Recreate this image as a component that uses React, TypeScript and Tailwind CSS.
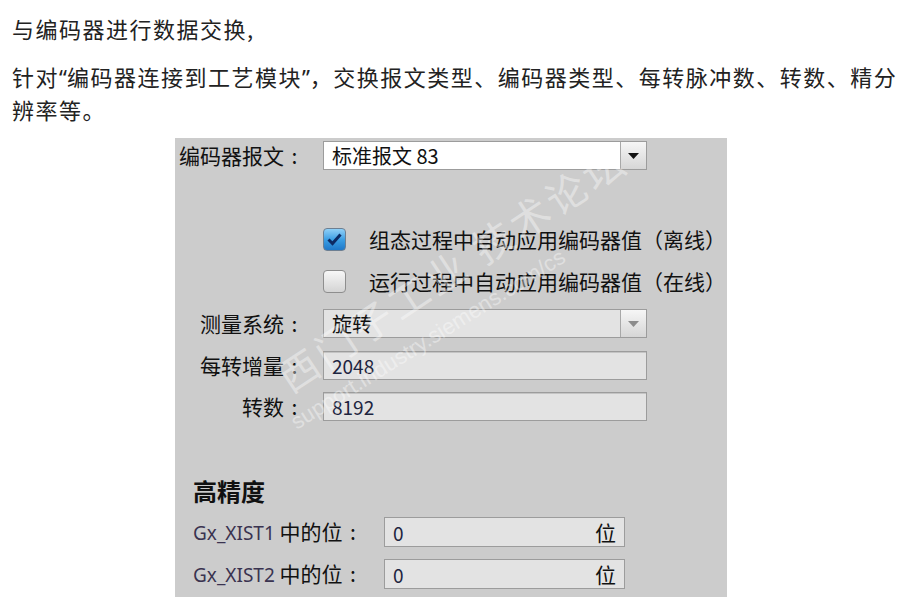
import React from 'react';

// 编码器参数面板
const cjk = "font-['Noto_Sans_CJK_SC','Noto_Sans',sans-serif]";

// 居中的冒号
const Colon = () => <span className="inline-block w-[21px] text-center">:</span>;

const Label = ({ children }: { children: React.ReactNode }) => (
	<div className="w-[126px] shrink-0 text-right text-[21px] leading-none text-[#111] whitespace-nowrap">
		{children}
		<Colon />
	</div>
);

const Field = ({ value }: { value: string }) => (
	<div className="w-[324px] h-[29px] flex items-center px-2 bg-[#e3e3e3] border border-[#9c9c9c] shadow-[inset_0_1px_0_#c4c4c4]">
		<span className="text-[19px] leading-none text-[#1e2540]">{value}</span>
	</div>
);

const Arrow = ({ color }: { color: string }) => (
	<svg width="11" height="6" viewBox="0 0 11 6">
		<path d="M0 0 L11 0 L5.5 6 Z" fill={color} />
	</svg>
);

const Select = ({ value, disabled }: { value: string; disabled?: boolean }) => (
	<div
		className={`w-[324px] h-[29px] flex items-stretch border border-[#9c9c9c] ${
			disabled ? 'bg-[#e3e3e3]' : 'bg-white'
		}`}
	>
		<div className="flex-1 flex items-center px-2 text-[20px] leading-none text-[#111]">{value}</div>
		<div className="w-[26px] flex items-center justify-center border-l border-[#a8a8a8] bg-gradient-to-b from-[#f6f6f6] to-[#d6d6d6]">
			<Arrow color={disabled ? '#8c8c8c' : '#111'} />
		</div>
	</div>
);

const Check = ({ checked, text }: { checked?: boolean; text: string }) => (
	<div className="flex items-center h-[29px] ml-[144px]">
		{checked ? (
			<div className="w-[23px] h-[23px] rounded-[4px] border border-[#6d7f92] bg-gradient-to-b from-[#8fd0f7] via-[#3b9fe4] to-[#1f78c9] flex items-center justify-center">
				<svg width="15" height="13" viewBox="0 0 15 13">
					<path d="M1.5 6.5 L5.5 10.5 L13.5 1.5" stroke="#0d2a63" strokeWidth="3" fill="none" />
				</svg>
			</div>
		) : (
			<div className="w-[23px] h-[23px] rounded-[4px] border border-[#8e8e8e] bg-gradient-to-b from-[#f7f7f7] to-[#d4d4d4]" />
		)}
		<span className="ml-[23px] text-[21px] leading-none text-[#111] whitespace-nowrap">{text}</span>
	</div>
);

const Row = ({ label, children, className = '' }: { label: string; children: React.ReactNode; className?: string }) => (
	<div className={`flex items-center gap-[18px] ${className}`}>
		<Label>{label}</Label>
		{children}
	</div>
);

const XistRow = ({ name, className = '' }: { name: string; className?: string }) => (
	<div className={`flex items-center pl-[14px] ${className}`}>
		<div className="w-[191px] shrink-0 leading-none whitespace-nowrap">
			<span className="text-[19px] text-[#3a3350] font-['Noto_Sans',sans-serif]">{name}</span>
			<span className="text-[21px] text-[#111]"> 中的位</span>
			<span className="text-[21px] text-[#111]">
				<Colon />
			</span>
		</div>
		<div className="w-[241px] h-[30px] flex items-center justify-between px-2 bg-[#e3e3e3] border border-[#9c9c9c]">
			<span className="text-[19px] leading-none text-[#1e2540]">0</span>
			<span className="text-[21px] leading-none text-[#111]">位</span>
		</div>
	</div>
);

export default function App() {
	return (
		<div className={`w-[902px] h-[603px] bg-white overflow-hidden ${cjk}`}>
			<div className="pl-3 pr-1 pt-3 text-[22px] tracking-[1.5px] leading-[32px] text-[#222]">
				<p>与编码器进行数据交换,</p>
				<p className="mt-4">
					针对<span className="font-['Noto_Sans',sans-serif] tracking-normal">“</span>编码器连接到工艺模块
					<span className="font-['Noto_Sans',sans-serif] tracking-normal">”</span>，交换报文类型、编码器类型、每转脉冲数、转数、精分辨率等。
				</p>
			</div>

			<div className="relative mx-auto mt-[13px] w-[552px] h-[459px] bg-[#cccccc] pl-1 pt-[3px]">
				<Row label="编码器报文">
					<Select value="标准报文 83" />
				</Row>

				<div className="mt-[55px]">
					<Check checked text="组态过程中自动应用编码器值（离线）" />
				</div>
				<div className="mt-[13px]">
					<Check text="运行过程中自动应用编码器值（在线）" />
				</div>

				<Row label="测量系统" className="mt-[13px]">
					<Select value="旋转" disabled />
				</Row>
				<Row label="每转增量" className="mt-[13px]">
					<Field value="2048" />
				</Row>
				<Row label="转数" className="mt-[12px]">
					<Field value="8192" />
				</Row>

				<div className="mt-[55px] pl-[14px] text-[24px] font-bold leading-[30px] text-[#111]">高精度</div>

				<XistRow name="Gx_XIST1" className="mt-[11px]" />
				<XistRow name="Gx_XIST2" className="mt-[12px]" />

				{/* 水印 */}
				<div className="pointer-events-none absolute left-[106px] top-[222px] origin-[0_50%] -rotate-[33.5deg] whitespace-nowrap text-[40px] leading-[40px] tracking-[4px] text-white/40">
					西门子工业 技术论坛
				</div>
				<div className="pointer-events-none absolute left-[118px] top-[274px] origin-[0_50%] -rotate-[32deg] whitespace-nowrap font-['Liberation_Sans',sans-serif] text-[22px] leading-[24px] text-white/40">
					support.industry.siemens.com/cs
				</div>
			</div>
		</div>
	);
}
